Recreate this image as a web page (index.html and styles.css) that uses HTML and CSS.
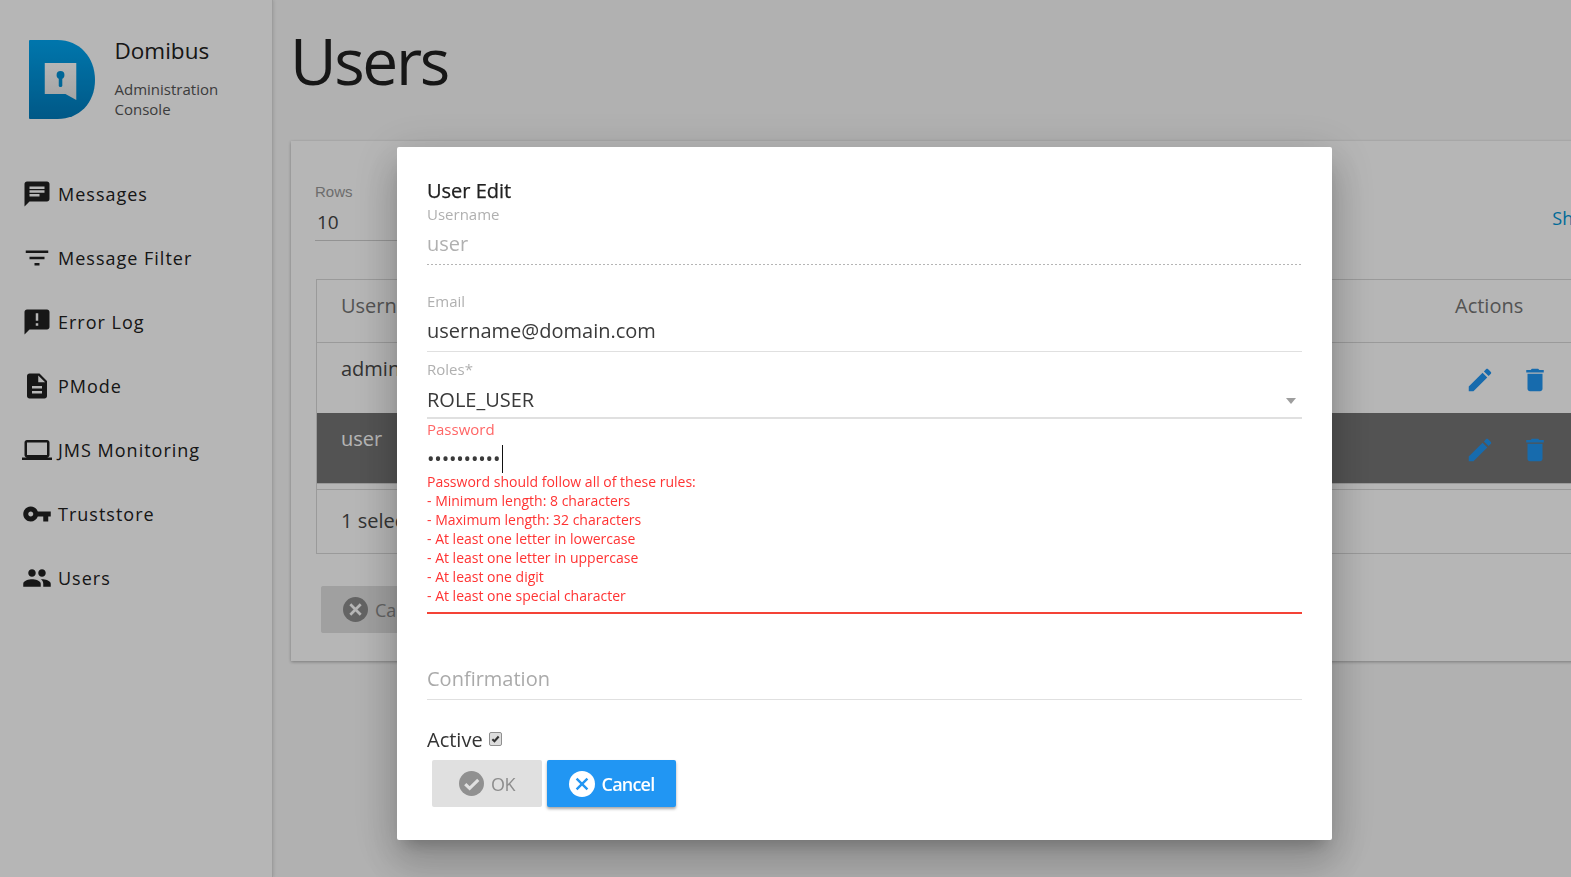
FILE: index.html
```html
<!DOCTYPE html>
<html lang="en">
<head>
<meta charset="utf-8">
<title>Users</title>
<link rel="stylesheet" href="styles.css">
</head>
<body>
<div class="app">
  <aside class="sidebar">
    <div class="brand">
      <svg class="logo" viewBox="0 0 67 80" preserveAspectRatio="none" aria-hidden="true">
        <defs><linearGradient id="lg" x1="0" y1="0" x2="0" y2="1"><stop offset="0" stop-color="#00a6f2"/><stop offset="1" stop-color="#007cbd"/></linearGradient>
        <linearGradient id="lb" x1="0" y1="0" x2="0" y2="1"><stop offset="0" stop-color="#fff"/><stop offset="1" stop-color="#e6e6e6"/></linearGradient></defs>
        <path d="M1 0H29C51 0 67 17 67 40S51 79 29 79H1Q0 79 0 78V1Q0 0 1 0Z" fill="url(#lg)"/>
        <path d="M16 23H48V60L37 54H16Z" fill="url(#lb)"/>
        <circle cx="32" cy="35" r="4" fill="#0090d4"/><rect x="30.2" y="36" width="3.6" height="11" rx="1.6" fill="#0090d4"/>
      </svg>
      <div class="brand-text">
        <div class="brand-name">Domibus</div>
        <div class="brand-sub">Administration Console</div>
      </div>
    </div>
    <nav class="nav">
      <a class="nav-item"><svg class="nav-icon" viewBox="0 0 24 24"><path d="M20 2H4c-1.100 0-2 .9-2 2v18l4-4h14c1.100 0 2-.9 2-2V4c0-1.100-.9-2-2-2zM6 9h12v2H6V9zm8 5H6v-2h8v2zm4-6H6V6h12v2z"/></svg><span>Messages</span></a>
      <a class="nav-item"><svg class="nav-icon" viewBox="0 0 24 24"><path d="M10 18h4v-2h-4v2zM3 6v2h18V6H3zm3 7h12v-2H6v2z"/></svg><span>Message Filter</span></a>
      <a class="nav-item"><svg class="nav-icon" viewBox="0 0 24 24"><path d="M20 2H4c-1.100 0-2 .9-2 2v18l4-4h14c1.100 0 2-.9 2-2V4c0-1.100-.9-2-2-2zm-7 9h-2V5h2v6zm0 4h-2v-2h2v2z"/></svg><span>Error Log</span></a>
      <a class="nav-item"><svg class="nav-icon" viewBox="0 0 24 24"><path d="M14 2H6c-1.100 0-2 .9-2 2v16c0 1.100.9 2 2 2h12c1.100 0 2-.9 2-2V8l-6-6zm2 16H8v-2h8v2zm0-4H8v-2h8v2zm-3-5V3.500L18.500 9H13z"/></svg><span>PMode</span></a>
      <a class="nav-item"><svg class="nav-icon" viewBox="0 0 24 24"><path d="M20 18c1.100 0 1.990-.9 1.990-2L22 6c0-1.100-.9-2-2-2H4c-1.100 0-2 .9-2 2v10c0 1.100.9 2 2 2H0v2h24v-2h-4zM4 6h16v10H4V6z"/></svg><span>JMS Monitoring</span></a>
      <a class="nav-item"><svg class="nav-icon" viewBox="0 0 24 24"><path d="M12.650 10C11.830 7.670 9.610 6 7 6c-3.310 0-6 2.690-6 6s2.690 6 6 6c2.610 0 4.830-1.670 5.650-4H17v4h4v-4h2v-4H12.650zM7 14c-1.100 0-2-.9-2-2s.9-2 2-2 2 .9 2 2-.9 2-2 2z"/></svg><span>Truststore</span></a>
      <a class="nav-item"><svg class="nav-icon" viewBox="0 0 24 24"><path d="M16 11c1.660 0 2.990-1.340 2.990-3S17.660 5 16 5c-1.660 0-3 1.340-3 3s1.340 3 3 3zm-8 0c1.660 0 2.990-1.340 2.990-3S9.660 5 8 5C6.340 5 5 6.340 5 8s1.340 3 3 3zm0 2c-2.330 0-7 1.170-7 3.500V19h14v-2.500c0-2.330-4.670-3.500-7-3.500zm8 0c-.29 0-.62.020-.97.050 1.160.84 1.970 1.970 1.970 3.450V19h6v-2.500c0-2.330-4.670-3.500-7-3.500z"/></svg><span>Users</span></a>
    </nav>
  </aside>
  <main class="main">
    <h1 class="page-title">Users</h1>
    <section class="card">
      <div class="toolbar">
        <div class="rows">
          <div class="rows-label">Rows</div>
          <div class="rows-value">10</div>
        </div>
        <a class="show-columns">Show columns</a>
      </div>
      <div class="table">
        <div class="row head"><span class="cell">Username</span><span class="actions-head">Actions</span></div>
        <div class="row body-row"><span class="cell">admin</span>
          <span class="actions"><svg class="act" viewBox="0 0 24 24"><path d="M3 17.250V21h3.750L17.810 9.940l-3.750-3.750L3 17.250zM20.710 7.040c.39-.39.39-1.020 0-1.410l-2.340-2.340c-.39-.39-1.020-.39-1.410 0l-1.830 1.830 3.750 3.750 1.830-1.830z"/></svg><svg class="act" viewBox="0 0 24 24"><path d="M6 19c0 1.100.9 2 2 2h8c1.100 0 2-.9 2-2V7H6v12zM19 4h-3.500l-1-1h-5l-1 1H5v2h14V4z"/></svg></span></div>
        <div class="row body-row selected"><span class="cell">user</span>
          <span class="actions"><svg class="act" viewBox="0 0 24 24"><path d="M3 17.250V21h3.750L17.810 9.940l-3.750-3.750L3 17.250zM20.710 7.040c.39-.39.39-1.020 0-1.410l-2.340-2.340c-.39-.39-1.020-.39-1.410 0l-1.830 1.830 3.750 3.750 1.830-1.830z"/></svg><svg class="act" viewBox="0 0 24 24"><path d="M6 19c0 1.100.9 2 2 2h8c1.100 0 2-.9 2-2V7H6v12zM19 4h-3.500l-1-1h-5l-1 1H5v2h14V4z"/></svg></span></div>
        <div class="row foot"><span class="cell">1 selected / 2 total</span></div>
      </div>
      <button class="ghost-btn"><svg class="btn-icon" viewBox="0 0 24 24"><circle cx="12" cy="12" r="12" fill="#8c8c8c"/><path d="M7 7l10 10M17 7L7 17" stroke="#fff" stroke-width="2.600"/></svg><span>Cancel</span></button>
    </section>
  </main>
</div>
<div class="backdrop"></div>
<div class="dialog">
  <h2 class="dialog-title">User Edit</h2>
  <div class="field f-username">
    <div class="label">Username</div>
    <div class="value disabled">user</div>
  </div>
  <div class="field f-email">
    <div class="label">Email</div>
    <div class="value">username@domain.com</div>
  </div>
  <div class="field f-roles">
    <div class="label">Roles*</div>
    <div class="value">ROLE_USER</div>
    <span class="caret-down"></span>
  </div>
  <div class="field f-password">
    <div class="label error-label">Password</div>
    <div class="value dots"><span>••••••••••</span><i class="text-caret"></i></div>
    <div class="errors">Password should follow all of these rules:<br>- Minimum length: 8 characters<br>- Maximum length: 32 characters<br>- At least one letter in lowercase<br>- At least one letter in uppercase<br>- At least one digit<br>- At least one special character</div>
  </div>
  <div class="field f-confirm">
    <div class="value placeholder">Confirmation</div>
  </div>
  <label class="active-row"><span>Active</span><span class="check"><svg viewBox="0 0 14 14"><path d="M3 7.200l2.700 2.700L11 3.800" fill="none" stroke="#333" stroke-width="2.600"/></svg></span></label>
  <div class="buttons">
    <button class="btn ok"><svg class="btn-icon" viewBox="0 0 24 24"><circle cx="12" cy="12" r="12" fill="#909090"/><path d="M6 12.500l4.200 4.200L18.500 8.500" fill="none" stroke="#e0e0e0" stroke-width="3"/></svg><span>OK</span></button>
    <button class="btn cancel"><svg class="btn-icon" viewBox="0 0 24 24"><circle cx="12" cy="12" r="12" fill="#fff"/><path d="M7 7l10 10M17 7L7 17" stroke="#2196f3" stroke-width="2.200"/></svg><span>Cancel</span></button>
  </div>
</div>
</body>
</html>
```

FILE: styles.css
```css
* { box-sizing: border-box; }
html, body { margin: 0; height: 100%; overflow: hidden; }
body { font-family: "Open Sans", sans-serif; color: #212121; background: #f8f8f8; }

.app { display: flex; height: 877px; width: 1571px; overflow: hidden; }

.sidebar { width: 273px; flex: none; background: #fff; border-right: 1px solid #dcdcdc; box-shadow: 1px 0 3px rgba(0,0,0,.1); padding: 40px 0 0 29px; }
.brand { display: flex; gap: 19.500px; }
.logo { width: 66px; height: 80px; flex: none; }
.brand-name { font-size: 22.500px; line-height: 24px; margin-top: -1px; }
.brand-sub { font-size: 15px; line-height: 20px; color: #555; margin-top: 16px; width: 110px; }

.nav { margin-top: 42px; margin-left: -7px; display: flex; flex-direction: column; }
.nav-item { display: flex; align-items: center; height: 64px; font-size: 18px; letter-spacing: 1px; color: #212121; }
.nav-icon { width: 30px; height: 30px; margin-right: 6px; fill: #212121; flex: none; }

.main { flex: 1; min-width: 0; padding: 0 0 0 18px; overflow: hidden; }
.page-title { font-size: 64px; font-weight: 400; letter-spacing: -2.400px; line-height: 76px; margin: 23px 0 42px -1px; }
.card { width: 1330px; height: 520px; background: #fff; box-shadow: 0 1px 3px rgba(0,0,0,.3); padding: 41px 25px 0 24px; }
.toolbar { display: flex; justify-content: space-between; height: 97px; }
.rows { width: 100px; }
.rows-label { font-size: 15px; line-height: 20px; color: #999; font-family: "Liberation Sans", sans-serif; }
.rows-value { font-size: 19px; line-height: 28px; margin-top: 6px; padding: 0 0 4px 2px; border-bottom: 1px solid #cfcfcf; color: #444; }
.show-columns { font-size: 18px; color: #0096d6; margin-top: 24px; white-space: nowrap; margin-right: -78px; }

.table { border: 1px solid #d8d8d8; border-right: 0; margin-left: 1px; }
.row { display: flex; justify-content: space-between; padding-left: 24px; color: #484848; }
.cell { font-size: 20px; }
.head { height: 63px; align-items: center; color: #757575; border-bottom: 1px solid #d8d8d8; padding-bottom: 11px; }
.actions-head { width: 141px; font-size: 20px; }
.body-row { height: 70px; padding-top: 12px; }
.selected { background: #757575; color: #fff; margin-bottom: 6px; box-shadow: 0 1px 0 #d8d8d8; }
.actions { display: flex; gap: 25px; width: 131px; padding-top: 10px; }
.act { width: 30px; height: 30px; fill: #2196f3; }
.foot { height: 64px; align-items: center; border-top: 1px solid #d8d8d8; padding-bottom: 2px; }
.ghost-btn { display: flex; align-items: center; gap: 7px; margin: 32px 0 0 6px; width: 120px; height: 47px; padding: 0 0 0 22px; background: #e0e0e0; border: 0; border-radius: 2px; font: 18px "Open Sans", sans-serif; color: #8a8a8a; }

.backdrop { position: fixed; inset: 0; background: rgba(0,0,0,.288); }

.dialog { position: fixed; left: 397px; top: 147px; width: 935px; height: 693px; background: #fff; border-radius: 2px; padding: 30px 30px 0; box-shadow: 0 11px 15px -7px rgba(0,0,0,.2), 0 24px 38px 3px rgba(0,0,0,.14), 0 9px 46px 8px rgba(0,0,0,.12); }
.dialog-title { font-size: 20px; font-weight: 500; line-height: 27px; margin: 0 0 1px; color: #212121; -webkit-text-stroke: .25px #212121; }
.label { font-size: 15px; line-height: 19px; color: #b0b0b0; }
.value { font-size: 20px; line-height: 27px; color: #3a3a3a; }
.field { position: relative; }
.f-username { height: 80px; }
.f-username .value { height: 38px; margin-top: 3px; padding-top: 3px; width: 874px; color: #b0b0b0; background: linear-gradient(to right, #b5b5b5 50%, transparent 50%) left bottom / 4px 1px repeat-x; }
.f-email { height: 75px; padding-top: 7px; }
.f-email .value { height: 37px; margin-top: 4px; padding-top: 2px; border-bottom: 1px solid #e0e0e0; }
.f-roles { height: 59px; }
.f-roles .value { height: 40px; padding-top: 7px; border-bottom: 2px solid #e0e0e0; }
.caret-down { position: absolute; right: 6px; top: 38px; width: 0; height: 0; border: 5.500px solid transparent; border-top: 6px solid #9e9e9e; border-bottom: 0; }
.f-password { height: 195px; border-bottom: 2px solid #f44336; }
.error-label { color: #f66; line-height: 20px; }
.dots { display: flex; align-items: center; height: 31px; margin-top: 4px; font-size: 20px; letter-spacing: -.2px; }
.text-caret { width: 1px; height: 28px; background: #111; margin-left: 2px; }
.errors { font-size: 14px; line-height: 19px; color: #f33; margin-top: -2px; }
.f-confirm { height: 86px; border-bottom: 1px solid #e0e0e0; padding-top: 51px; }
.placeholder { color: #aaa; }
.active-row { display: flex; align-items: flex-start; gap: 6px; margin-top: 26px; font-size: 20px; line-height: 27px; color: #333; }
.check { width: 13px; height: 14px; margin-top: 6px; border: 1px solid #8f8f8f; border-radius: 2px; background: #ddd; display: block; }
.check svg { display: block; width: 100%; height: 100%; }
.buttons { display: flex; gap: 5px; margin: 7px 0 0 5px; }
.btn { display: flex; align-items: center; justify-content: center; gap: 7px; height: 47px; border: 0; border-radius: 2px; font: 18px "Open Sans", sans-serif; }
.btn-icon { width: 25px; height: 25px; flex: none; }
.ok { width: 110px; background: #e0e0e0; color: #8d8d8d; padding: 0 2px 0 2px; letter-spacing: -.5px; }
.cancel { width: 129px; background: #2196f3; color: #fff; font-weight: 600; box-shadow: 0 2px 3px rgba(0,0,0,.35); letter-spacing: -.8px; }
.cancel .btn-icon { width: 26px; height: 26px; }
```
